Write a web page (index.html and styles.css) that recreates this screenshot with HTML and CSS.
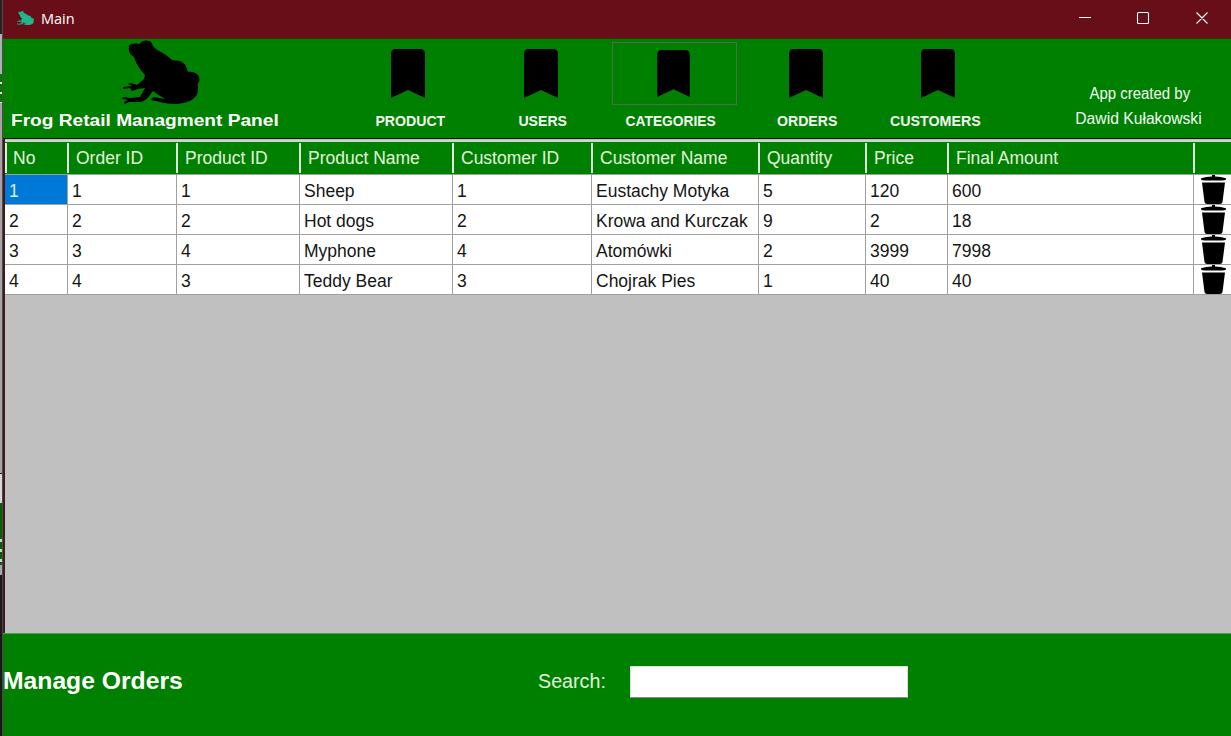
FILE: index.html
```html
<!DOCTYPE html>
<html lang="en">
<head>
<meta charset="utf-8">
<title>Main</title>
<link rel="stylesheet" href="styles.css">
</head>
<body>
<svg class="defs" width="0" height="0" aria-hidden="true">
  <symbol id="frog" viewBox="0 0 78 64">
    <path d="M7 6 C8 3 15 3 18 4 C19 0 27-1 30 3 C30 8 38 11 44 15 L50 20 C54 21 58 20 60 22 C64 24 65 29 66 32 C74 31 79 36 77 42 C74 44 78 51 74 56 C70 62 60 64 52 64 C43 64 36 61 29 60 L31 57 L43 59 C39 56 34 54 31 51 C27 56 25 61 18 62 L7 62 L3 64 L2 62 L6 60 L0 59 L1 57 L8 58 L18 57 L23 48 L16 49 L10 51 L8 48 L1 49 L1 47 L10 46 L6 44 L9 43 L15 45 L22 39 L23 35 C18 30 14 24 12 17 C8 15 6 10 7 6Z"/>
  </symbol>
  <symbol id="bookmark" viewBox="0 0 34 49"><path d="M0 5 Q0 0 5 0 H29 Q34 0 34 5 V49 L17 41 L0 49Z"/></symbol>
  <symbol id="trash" viewBox="0 0 25 29"><path d="M0 3.200 Q5 1.800 11 1.500 V0 H14 V1.500 Q20 1.800 25 3.200 V4.500 Q24 5.500 21 5.500 H4 Q1 5.500 0 4.500Z M1 7.500 H24 L21.500 27 Q21 29 19 29 H6 Q4 29 3.500 27Z"/></symbol>
</svg>
<div class="desktop">
  <div class="behind">
    <i class="b1"></i><i class="b2"></i><i class="b3"></i><i class="b4"></i><i class="b5"></i><i class="b6"></i><i class="b7"></i><i class="b8"></i><i class="b9"></i>
  </div>
  <div class="window">
    <div class="titlebar">
      <svg class="app-icon"><use href="#frog"/></svg>
      <span class="title">Main</span>
      <svg class="controls" width="134" height="16" viewBox="0 0 134 16"><path d="M1 7.5h12M60.5 2.5h9a1 1 0 0 1 1 1v9a1 1 0 0 1-1 1h-9a1 1 0 0 1-1-1v-9a1 1 0 0 1 1-1zM118.500 2.500l11 11M129.500 2.500l-11 11"/></svg>
    </div>
    <header class="header">
      <div class="brand"><svg class="frog"><use href="#frog"/></svg><b class="brand-name">Frog Retail Managment Panel</b></div>
      <nav class="nav">
        <div class="item"><div class="pic"><svg><use href="#bookmark"/></svg></div><b class="n1">PRODUCT</b></div>
        <div class="item"><div class="pic"><svg><use href="#bookmark"/></svg></div><b class="n2">USERS</b></div>
        <div class="item"><div class="pic focus"><svg><use href="#bookmark"/></svg></div><b class="n3">CATEGORIES</b></div>
        <div class="item"><div class="pic"><svg><use href="#bookmark"/></svg></div><b class="n4">ORDERS</b></div>
        <div class="item"><div class="pic"><svg><use href="#bookmark"/></svg></div><b class="n5">CUSTOMERS</b></div>
      </nav>
      <div class="credit"><span class="c1">App created by</span><span class="c2">Dawid Kułakowski</span></div>
    </header>
    <main class="grid">
      <div class="row head"><span>No</span><span>Order ID</span><span>Product ID</span><span>Product Name</span><span>Customer ID</span><span>Customer Name</span><span>Quantity</span><span>Price</span><span>Final Amount</span><span></span></div>
      <div class="row"><span class="sel">1</span><span>1</span><span>1</span><span>Sheep</span><span>1</span><span>Eustachy Motyka</span><span>5</span><span>120</span><span>600</span><span class="del"><svg><use href="#trash"/></svg></span></div>
      <div class="row"><span>2</span><span>2</span><span>2</span><span>Hot dogs</span><span>2</span><span>Krowa and Kurczak</span><span>9</span><span>2</span><span>18</span><span class="del"><svg><use href="#trash"/></svg></span></div>
      <div class="row"><span>3</span><span>3</span><span>4</span><span>Myphone</span><span>4</span><span>Atomówki</span><span>2</span><span>3999</span><span>7998</span><span class="del"><svg><use href="#trash"/></svg></span></div>
      <div class="row"><span>4</span><span>4</span><span>3</span><span>Teddy Bear</span><span>3</span><span>Chojrak Pies</span><span>1</span><span>40</span><span>40</span><span class="del"><svg><use href="#trash"/></svg></span></div>
    </main>
    <footer class="footer"><h1>Manage Orders</h1><label for="q">Search:</label><input id="q" type="text"></footer>
  </div>
</div>
</body>
</html>
```
FILE: styles.css
```css
* { box-sizing: border-box; }
body { margin: 0; font-family: "Liberation Sans", Arial, sans-serif; overflow: hidden; }
.defs { position: absolute; }
.desktop { display: flex; width: 1231px; height: 736px; }

/* sliver of the windows underneath */
.behind { width: 3px; flex: none; display: flex; flex-direction: column; background: #1b181b; border-right: 1px solid #5b4448; }
.behind i { display: block; }
.b1 { height: 34px; background: #242323; }
.b2 { height: 40px; background: #a9b2bd; }
.b3 { height: 29px; background: repeating-linear-gradient(#007a00 0 8px, #dfe8df 8px 10px); }
.b4 { height: 370px; background: #a4a4a4; }
.b5 { height: 30px; background: #d8d8d8; border-top: 1px solid #111; }
.b6 { height: 36px; background: #006400; }
.b7 { height: 26px; background: repeating-linear-gradient(#d0d0d0 0 3px, #006400 3px 10px); }
.b8 { height: 10px; background: #a6a6b6; }
.b9 { height: 90px; background: #1b181b; }

.window { flex: 1; display: flex; flex-direction: column; background: #008000; min-width: 0; }
.titlebar { height: 39px; background: #670e19; border-bottom: 1px solid #4a260b; display: flex; align-items: center; padding-left: 13px; color: #fff; }
.app-icon { width: 19px; height: 14px; fill: #1fb68b; margin-top: -3px; }
.title { font: 14.5px "Open Sans", sans-serif; margin: -2px 0 0 6px; }
.controls { margin: -3px 19px 0 auto; fill: none; stroke: #fff; stroke-width: 1.1; }

.header { height: 99px; display: flex; color: #f2faf0; }
.brand { width: 343px; display: flex; flex-direction: column; padding: 1px 0 0 8px; }
.frog { width: 78px; height: 64px; margin-left: 111px; }
.brand-name { font-size: 16px; line-height: 18px; margin-top: 8px; white-space: nowrap; transform: scaleX(1.195); transform-origin: left; color: #fff; }
.nav { display: flex; gap: 7.5px; padding-top: 3px; }
.item { width: 125px; display: flex; flex-direction: column; align-items: center; }
.pic { width: 125px; height: 63px; padding: 7px 0 0 45px; }
.pic svg { width: 34px; height: 49px; display: block; }
.focus { border: 1px solid #4d6f4d; padding-left: 44px; transform: translateX(1px); }
.focus svg { width: 33px; height: 47px; }
.item b { font-size: 15.5px; line-height: 18px; margin-top: 7px; transform: scaleX(.91); white-space: nowrap; }
.item .n1 { margin-left: 4px; }
.item .n2 { margin-left: 3px; }
.item .n3 { margin-right: 6px; transform: scaleX(.89); }
.item .n4 { margin-left: 2px; }
.item .n5 { margin-right: 6px; transform: scaleX(.92); }
.credit { width: 128px; margin-left: auto; margin-right: 29px; padding-top: 42px; display: flex; flex-direction: column; align-items: center; font-size: 16px; line-height: 25px; white-space: nowrap; }
.c1 { transform: translateX(2px) scaleX(.935); }
.c2 { transform: scaleX(.98); }

.grid { height: 495px; background: #c0c0c0; border-top: 1px solid #081808; border-left: 2px solid #3a1c20; }
.row { display: grid; grid-template-columns: 63px 109px 123px 153px 139px 167px 107px 82px 246px 37px; grid-template-rows: 30px; height: 30px; background: #fff; color: #151515; font-size: 17.5px; }
.row span { border-right: 1px solid #a0a0a0; border-bottom: 1px solid #a0a0a0; padding: 0 0 0 4px; line-height: 32px; white-space: nowrap; }
.row .sel { background: #0078d7; color: #d8efff; }
.row .del { padding: 0 0 0 7px; border-right: 0; }
.del svg { width: 25px; height: 29px; display: block; }
.head { height: 35px; grid-template-rows: 33px; background: #008000; border-top: 2px solid #c6dcc6; margin-top: 1px; color: #e4f4df; }
.row.head span { border-right: 0; padding: 1px 0 0 6px; line-height: 30px; background: linear-gradient(#dff0df, #dff0df) 0 1px / 2px 30px no-repeat; text-indent: 2px; }
.row.head span:not(:first-child) { margin-left: -1px; padding-left: 7px; }

.footer { flex: 1; display: flex; align-items: center; padding-bottom: 8px; color: #fff; border-top: 1px solid #4da04d; }
.footer h1 { width: 535px; margin: -1px 0 0; font-size: 24.7px; }
.footer label { width: 92px; font-size: 19.7px; color: #e2f4dd; }
.footer input { width: 278px; height: 32px; border: 1px solid #d5e5d5; border-bottom-color: #888; border-radius: 1px; background: #fff; margin-top: 2px; }
```
